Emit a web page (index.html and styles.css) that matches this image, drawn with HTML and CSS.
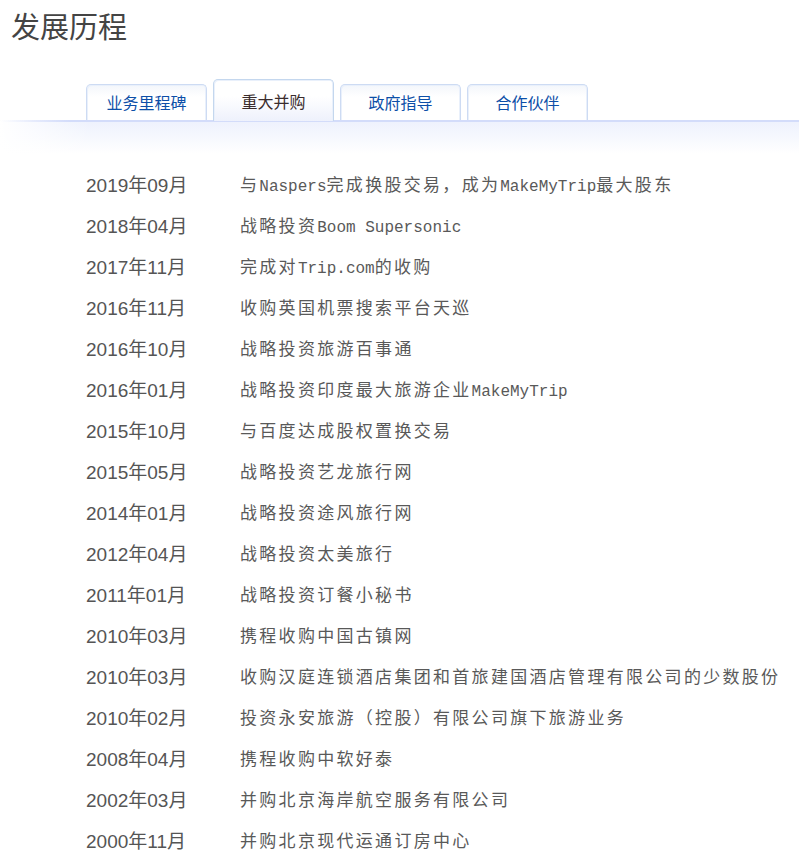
FILE: index.html
```html
<!DOCTYPE html>
<html lang="zh-CN">
<head>
<meta charset="utf-8">
<title>发展历程</title>
<link rel="stylesheet" href="styles.css">
</head>
<body>
<h1 class="title">发展历程</h1>
<div class="tabs">
  <div class="tab">业务里程碑</div>
  <div class="tab active">重大并购</div>
  <div class="tab">政府指导</div>
  <div class="tab">合作伙伴</div>
</div>
<div class="band"></div>
<ul class="list">
  <li class="row"><span class="date">2019年09月</span><span class="desc">与<span class="en">Naspers</span>完成换股交易，成为<span class="en">MakeMyTrip</span>最大股东</span></li>
  <li class="row"><span class="date">2018年04月</span><span class="desc">战略投资<span class="en">Boom Supersonic</span></span></li>
  <li class="row"><span class="date">2017年11月</span><span class="desc">完成对<span class="en">Trip.com</span>的收购</span></li>
  <li class="row"><span class="date">2016年11月</span><span class="desc">收购英国机票搜索平台天巡</span></li>
  <li class="row"><span class="date">2016年10月</span><span class="desc">战略投资旅游百事通</span></li>
  <li class="row"><span class="date">2016年01月</span><span class="desc">战略投资印度最大旅游企业<span class="en">MakeMyTrip</span></span></li>
  <li class="row"><span class="date">2015年10月</span><span class="desc">与百度达成股权置换交易</span></li>
  <li class="row"><span class="date">2015年05月</span><span class="desc">战略投资艺龙旅行网</span></li>
  <li class="row"><span class="date">2014年01月</span><span class="desc">战略投资途风旅行网</span></li>
  <li class="row"><span class="date">2012年04月</span><span class="desc">战略投资太美旅行</span></li>
  <li class="row"><span class="date">2011年01月</span><span class="desc">战略投资订餐小秘书</span></li>
  <li class="row"><span class="date">2010年03月</span><span class="desc">携程收购中国古镇网</span></li>
  <li class="row"><span class="date">2010年03月</span><span class="desc">收购汉庭连锁酒店集团和首旅建国酒店管理有限公司的少数股份</span></li>
  <li class="row"><span class="date">2010年02月</span><span class="desc">投资永安旅游（控股）有限公司旗下旅游业务</span></li>
  <li class="row"><span class="date">2008年04月</span><span class="desc">携程收购中软好泰</span></li>
  <li class="row"><span class="date">2002年03月</span><span class="desc">并购北京海岸航空服务有限公司</span></li>
  <li class="row"><span class="date">2000年11月</span><span class="desc">并购北京现代运通订房中心</span></li>
</ul>
</body>
</html>
```
FILE: styles.css
```css
html, body {
  margin: 0;
  padding: 0;
  background: #fff;
  overflow: hidden;
}
body {
  font-family: "Noto Sans CJK SC", "Liberation Sans", sans-serif;
  width: 799px;
}
.title {
  margin: 0;
  padding-left: 11px;
  font-size: 29px;
  line-height: 40px;
  height: 40px;
  font-weight: normal;
  color: #444;
  padding-top: 5px;
}
.tabs {
  display: flex;
  align-items: flex-end;
  gap: 6px;
  padding-left: 86px;
  margin-top: 35px;
  height: 40px;
  position: relative;
  z-index: 2;
}
.tab {
  width: 119px;
  height: 35px;
  border: 1px solid #cddbf3;
  border-bottom: none;
  border-radius: 5px 5px 0 0;
  box-shadow: inset 1px 1px 0 #e9f0fb, inset -1px 0 0 #e9f0fb;
  background: linear-gradient(to bottom, #f3f6fb 0, #fff 12px, #fff 100%);
  color: #0d4fa8;
  font-size: 16px;
  line-height: 35px;
  text-align: center;
}
.tab.active {
  height: 41px;
  margin-bottom: -1px;
  line-height: 42px;
  color: #3a2c2c;
  border-color: #c4d7ee;
  background: linear-gradient(to bottom, #fff 0, #fff 40%, #eef1fc 100%);
}
.band {
  height: 34px;
  background:
    linear-gradient(to right, rgba(211, 220, 250, 0) 0, #d3dcfa 70px) top left / 100% 2px no-repeat,
    linear-gradient(to right, #fff 0, rgba(255, 255, 255, 0) 90px),
    linear-gradient(to bottom, #edf1fd 0, #f6f8fe 50%, #fff 100%);
  position: relative;
  z-index: 1;
}
.list {
  list-style: none;
  margin: 0;
  padding: 9px 0 0 86px;
}
.row {
  display: flex;
  height: 41px;
  align-items: center;
  white-space: nowrap;
}
.date {
  width: 154px;
  flex: none;
  font-family: "Liberation Sans", "Noto Sans CJK SC", sans-serif;
  font-size: 19px;
  color: #555;
}
.desc {
  font-family: "Noto Sans CJK SC", sans-serif;
  font-size: 17px;
  letter-spacing: 2.3px;
  color: #595959;
}
.en {
  font-family: "Liberation Mono", monospace;
  font-size: 16px;
  letter-spacing: 0;
}
```
